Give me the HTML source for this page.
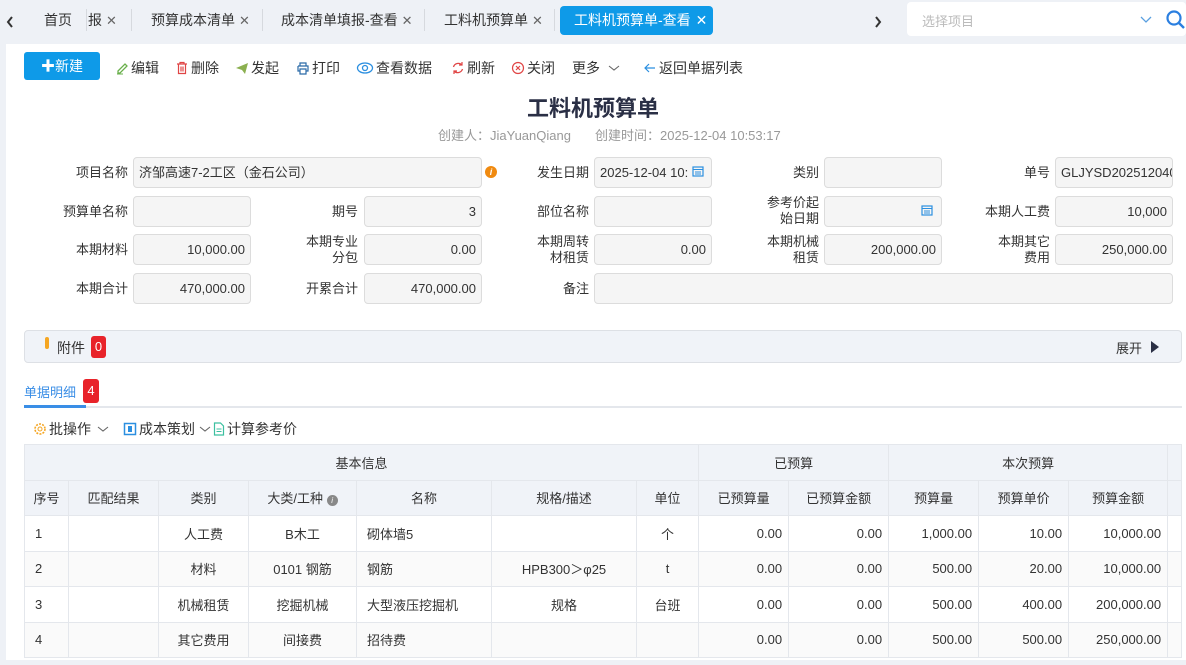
<!DOCTYPE html>
<html><head><meta charset="utf-8"><style>
*{box-sizing:border-box;margin:0;padding:0}
body{width:1186px;height:665px;overflow:hidden;background:#eef1f6;font-family:"Liberation Sans","Noto Sans CJK SC",sans-serif;font-size:13px;color:#333;position:relative}
.a{position:absolute}
.tab{position:absolute;top:6px;height:28px;line-height:28px;font-size:14px;color:#333;white-space:nowrap}
.sep{position:absolute;top:9px;width:1px;height:22px;background:#d6d9de}
.x{color:#666;font-size:13px;margin-left:4px}
.page{position:absolute;left:6px;top:44px;width:1180px;height:616px;background:#fff}
.tb{position:absolute;top:58px;font-size:14px;color:#333;white-space:nowrap;display:flex;align-items:center;gap:2px}
.tb svg{display:block}
.lbl{position:absolute;font-size:13px;color:#333;text-align:right;line-height:16px;white-space:nowrap}
.in{position:absolute;height:31px;background:#f5f5f5;border:1px solid #dcdcdc;border-radius:4px;font-size:13px;line-height:29px;padding:0 5px;color:#333;white-space:nowrap;overflow:hidden}
.r{text-align:right}
table{position:absolute;left:24px;top:444px;border-collapse:collapse;table-layout:fixed;width:1157px}
td,th{border:1px solid #e4e7ec;font-size:13px;font-weight:normal;height:35.5px;white-space:nowrap;overflow:hidden}
th{background:#f0f3f8;color:#333;text-align:center}
td{color:#333}
tr.alt td{background:#fafafa}
.c{text-align:center}.rr{text-align:right;padding-right:6px}.l{padding-left:10px}
</style></head><body>
<svg class="a" style="left:6px;top:16px" width="8" height="12"><path d="M6 1L2 6l4 5" fill="none" stroke="#333" stroke-width="2"/></svg>
<div class="tab" style="left:44px">首页</div>
<div class="sep" style="left:86px"></div>
<div class="tab" style="left:88px">报<span class="x">✕</span></div>
<div class="sep" style="left:131px"></div>
<div class="tab" style="left:151px">预算成本清单<span class="x">✕</span></div>
<div class="sep" style="left:262px"></div>
<div class="tab" style="left:281px">成本清单填报-查看<span class="x">✕</span></div>
<div class="sep" style="left:424px"></div>
<div class="tab" style="left:444px">工料机预算单<span class="x">✕</span></div>
<div class="sep" style="left:554px"></div>
<div class="a" style="left:560px;top:6px;width:153px;height:29px;background:#0e9ae8;border-radius:4px;color:#fff;font-size:14px;line-height:29px;padding-left:14px">工料机预算单-查看<span style="margin-left:5px">✕</span></div>
<svg class="a" style="left:874px;top:16px" width="8" height="12"><path d="M2 1l4 5-4 5" fill="none" stroke="#333" stroke-width="2"/></svg>
<div class="a" style="left:907px;top:2px;width:279px;height:34px;background:#fff;border-radius:4px"></div>
<div class="a" style="left:922px;top:11px;color:#bbb;font-size:13px">选择项目</div>
<svg class="a" style="left:1139px;top:15px" width="14" height="10"><path d="M2 2l5 5 5-5" fill="none" stroke="#5aa0e0" stroke-width="1.3"/></svg>
<svg class="a" style="left:1165px;top:9px" width="21" height="21"><circle cx="9" cy="9" r="6.5" fill="none" stroke="#2b7fe0" stroke-width="2.2"/><path d="M14 14l5 5" stroke="#2b7fe0" stroke-width="2.4"/></svg>

<div class="page"></div>
<div class="a" style="left:24px;top:52px;width:76px;height:28px;background:#0e9ae8;border-radius:3px;color:#fff;font-size:14px;line-height:28px;text-align:center">✚新建</div>
<div class="tb" style="left:115px"><svg width="14" height="14"><path d="M3 10l7-7 2 2-7 7H3z" fill="none" stroke="#6ab04c" stroke-width="1.3"/><path d="M2 13h6" stroke="#6ab04c"/></svg>编辑</div>
<div class="tb" style="left:175px"><svg width="14" height="14"><path d="M2 3h10M5 3V1.5h4V3M3.5 3v9.5h7V3M6 5.5v5M8 5.5v5" fill="none" stroke="#e04545" stroke-width="1.2"/></svg>删除</div>
<div class="tb" style="left:235px"><svg width="14" height="14"><path d="M1 7l12-5-3 11-3-4z" fill="#8bb050"/></svg>发起</div>
<div class="tb" style="left:296px"><svg width="14" height="14"><path d="M4 5V2h6v3M2 5h10v5h-2M4 10H2V5M4 8h6v5H4z" fill="none" stroke="#2a6aa8" stroke-width="1.2"/></svg>打印</div>
<div class="tb" style="left:356px"><svg width="18" height="14"><ellipse cx="9" cy="7" rx="7.5" ry="5" fill="none" stroke="#2b8fe0" stroke-width="1.3"/><circle cx="9" cy="7" r="2.5" fill="none" stroke="#2b8fe0" stroke-width="1.3"/></svg>查看数据</div>
<div class="tb" style="left:451px"><svg width="14" height="14"><path d="M11 4A5 5 0 0 0 2.5 6M3 10a5 5 0 0 0 8.5-2" fill="none" stroke="#e04545" stroke-width="1.3"/><path d="M11 1v3H8M3 13v-3h3" fill="none" stroke="#e04545" stroke-width="1.2"/></svg>刷新</div>
<div class="tb" style="left:511px"><svg width="14" height="14"><circle cx="7" cy="7" r="5.5" fill="none" stroke="#e04545" stroke-width="1.2"/><path d="M5 5l4 4M9 5l-4 4" stroke="#e04545" stroke-width="1.2"/></svg>关闭</div>
<div class="tb" style="left:572px">更多 <svg width="12" height="10" style="margin-left:6px"><path d="M1 3l5 4 5-4" fill="none" stroke="#666" stroke-width="1.1"/></svg></div>
<div class="tb" style="left:643px"><svg width="14" height="14"><path d="M12 7H2M6 3L2 7l4 4" fill="none" stroke="#2b8fe0" stroke-width="1.2"/></svg>返回单据列表</div>
<div class="a" style="left:0;width:1186px;top:91px;text-align:center;font-size:22px;font-weight:bold;color:#2a2f45">工料机预算单</div>
<div class="a" style="left:438px;top:125px;font-size:13px;color:#999">创建人：JiaYuanQiang</div>
<div class="a" style="left:595px;top:125px;font-size:13px;color:#999">创建时间：2025-12-04 10:53:17</div>
<div class="lbl" style="right:1058px;top:165px">项目名称</div>
<div class="in" style="left:133px;top:157px;width:349px">济邹高速7-2工区（金石公司）</div>
<div class="a" style="left:485px;top:166px;width:12px;height:12px;border-radius:6px;background:#f08a10;color:#fff;font-size:9px;text-align:center;line-height:12px;font-style:italic;font-weight:bold">i</div>
<div class="lbl" style="right:597px;top:165px">发生日期</div>
<div class="in" style="left:594px;top:157px;width:118px">2025-12-04 10:<svg style="position:absolute;right:7px;top:7px" width="12" height="12"><rect x="1" y="2" width="10" height="9" fill="none" stroke="#2b8fe0" stroke-width="1.2"/><path d="M1 4.5h10M3 7h6M3 9h6" stroke="#2b8fe0"/></svg></div>
<div class="lbl" style="right:367px;top:165px">类别</div>
<div class="in" style="left:824px;top:157px;width:118px"></div>
<div class="lbl" style="right:136px;top:165px">单号</div>
<div class="in" style="left:1055px;top:157px;width:118px">GLJYSD202512040</div>

<div class="lbl" style="right:1058px;top:204px">预算单名称</div>
<div class="in" style="left:133px;top:196px;width:118px"></div>
<div class="lbl" style="right:828px;top:204px">期号</div>
<div class="in r" style="left:364px;top:196px;width:118px">3</div>
<div class="lbl" style="right:597px;top:204px">部位名称</div>
<div class="in" style="left:594px;top:196px;width:118px"></div>
<div class="lbl" style="right:367px;top:195px">参考价起<br>始日期</div>
<div class="in r" style="left:824px;top:196px;width:118px"><svg style="position:absolute;right:8px;top:7px" width="12" height="12"><rect x="1" y="2" width="10" height="9" fill="none" stroke="#2b8fe0" stroke-width="1.2"/><path d="M1 4.5h10M3 7h6M3 9h6" stroke="#2b8fe0"/></svg></div>
<div class="lbl" style="right:136px;top:204px">本期人工费</div>
<div class="in r" style="left:1055px;top:196px;width:118px">10,000</div>

<div class="lbl" style="right:1058px;top:242px">本期材料</div>
<div class="in r" style="left:133px;top:234px;width:118px">10,000.00</div>
<div class="lbl" style="right:828px;top:234px">本期专业<br>分包</div>
<div class="in r" style="left:364px;top:234px;width:118px">0.00</div>
<div class="lbl" style="right:597px;top:234px">本期周转<br>材租赁</div>
<div class="in r" style="left:594px;top:234px;width:118px">0.00</div>
<div class="lbl" style="right:367px;top:234px">本期机械<br>租赁</div>
<div class="in r" style="left:824px;top:234px;width:118px">200,000.00</div>
<div class="lbl" style="right:136px;top:234px">本期其它<br>费用</div>
<div class="in r" style="left:1055px;top:234px;width:118px">250,000.00</div>

<div class="lbl" style="right:1058px;top:281px">本期合计</div>
<div class="in r" style="left:133px;top:273px;width:118px">470,000.00</div>
<div class="lbl" style="right:828px;top:281px">开累合计</div>
<div class="in r" style="left:364px;top:273px;width:118px">470,000.00</div>
<div class="lbl" style="right:597px;top:281px">备注</div>
<div class="in" style="left:594px;top:273px;width:579px"></div>
<div class="a" style="left:24px;top:330px;width:1158px;height:33px;background:#f0f3f8;border:1px solid #dde0e5;border-radius:4px"></div>
<div class="a" style="left:45px;top:337px;width:4px;height:12px;background:#f5a623;border-radius:2px"></div>
<div class="a" style="left:57px;top:338px;font-size:14px">附件</div>
<div class="a" style="left:91px;top:336px;width:15px;height:22px;background:#e8232a;border-radius:3px;color:#fff;font-size:13px;text-align:center;line-height:22px">0</div>
<div class="a" style="left:1116px;top:338px;font-size:13px">展开</div>
<svg class="a" style="left:1150px;top:341px" width="10" height="12"><path d="M1 0l8 6-8 6z" fill="#2a2f45"/></svg>
<div class="a" style="left:24px;top:382px;font-size:13px;color:#3a8ee6">单据明细</div>
<div class="a" style="left:83px;top:379px;width:16px;height:24px;background:#e8232a;border-radius:3px;color:#fff;font-size:13px;text-align:center;line-height:24px">4</div>
<div class="a" style="left:24px;top:406px;width:1158px;height:2px;background:#e4e7ec"></div>
<div class="a" style="left:24px;top:405px;width:62px;height:3px;background:#3a8ee6"></div>
<div class="tb" style="left:33px;top:419px"><svg width="14" height="14"><circle cx="7" cy="7" r="5" fill="none" stroke="#f5a623" stroke-width="1.6" stroke-dasharray="2 1.2"/><circle cx="7" cy="7" r="2" fill="none" stroke="#f5a623"/></svg>批操作 <svg width="12" height="10" style="margin-left:4px"><path d="M1 3l5 4 5-4" fill="none" stroke="#666" stroke-width="1.1"/></svg></div>
<div class="tb" style="left:123px;top:419px"><svg width="14" height="14"><rect x="1.5" y="1.5" width="11" height="11" fill="none" stroke="#2b8fe0" stroke-width="1.5"/><rect x="5" y="4" width="4" height="6" fill="#2b8fe0"/></svg>成本策划 <svg width="12" height="10" style="margin-left:2px"><path d="M1 3l5 4 5-4" fill="none" stroke="#666" stroke-width="1.1"/></svg><svg width="12" height="14"><path d="M1.5 1h6l3 3v9h-9z" fill="none" stroke="#3cc0a0" stroke-width="1.2"/><path d="M3.5 7h5M3.5 9.5h5" stroke="#3cc0a0"/></svg>计算参考价</div>
<table>
<colgroup><col style="width:44px"><col style="width:90px"><col style="width:90px"><col style="width:108px"><col style="width:135px"><col style="width:145px"><col style="width:62px"><col style="width:90px"><col style="width:100px"><col style="width:90px"><col style="width:90px"><col style="width:99px"><col style="width:14px"></colgroup>
<tr><th colspan="7">基本信息</th><th colspan="2">已预算</th><th colspan="3">本次预算</th><th></th></tr>
<tr><th>序号</th><th>匹配结果</th><th>类别</th><th>大类/工种 <span style="display:inline-block;width:11px;height:11px;border-radius:6px;background:#888;color:#fff;font-size:8px;line-height:11px;font-style:italic">i</span></th><th>名称</th><th>规格/描述</th><th>单位</th><th>已预算量</th><th>已预算金额</th><th>预算量</th><th>预算单价</th><th>预算金额</th><th></th></tr>
<tr><td class="l">1</td><td></td><td class="c">人工费</td><td class="c">B木工</td><td class="l">砌体墙5</td><td></td><td class="c">个</td><td class="rr">0.00</td><td class="rr">0.00</td><td class="rr">1,000.00</td><td class="rr">10.00</td><td class="rr">10,000.00</td><td></td></tr>
<tr class="alt"><td class="l">2</td><td></td><td class="c">材料</td><td class="c">0101 钢筋</td><td class="l">钢筋</td><td class="c">HPB300＞φ25</td><td class="c">t</td><td class="rr">0.00</td><td class="rr">0.00</td><td class="rr">500.00</td><td class="rr">20.00</td><td class="rr">10,000.00</td><td></td></tr>
<tr><td class="l">3</td><td></td><td class="c">机械租赁</td><td class="c">挖掘机械</td><td class="l">大型液压挖掘机</td><td class="c">规格</td><td class="c">台班</td><td class="rr">0.00</td><td class="rr">0.00</td><td class="rr">500.00</td><td class="rr">400.00</td><td class="rr">200,000.00</td><td></td></tr>
<tr class="alt"><td class="l">4</td><td></td><td class="c">其它费用</td><td class="c">间接费</td><td class="l">招待费</td><td></td><td></td><td class="rr">0.00</td><td class="rr">0.00</td><td class="rr">500.00</td><td class="rr">500.00</td><td class="rr">250,000.00</td><td></td></tr>
</table>
<div class="a" style="left:0;top:660px;width:1186px;height:5px;background:#eef1f6"></div>
</body></html>
